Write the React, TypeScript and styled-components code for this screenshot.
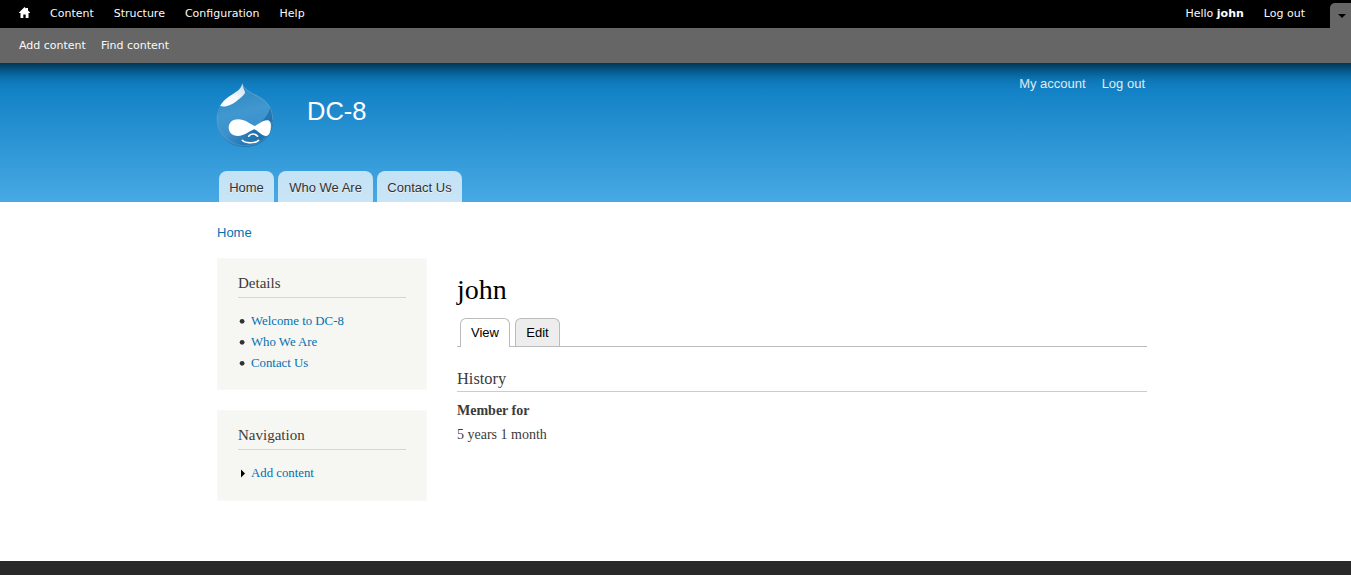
import React from 'react';
import styled, { createGlobalStyle } from 'styled-components';

const sans = '"Liberation Sans", Arial, sans-serif';
const serif = '"Liberation Serif", "Times New Roman", serif';

const GlobalStyle = createGlobalStyle`
  * { box-sizing: border-box; }
  body { margin: 0; background: #fff; color: #3b3b3b; font-family: ${serif}; overflow: hidden; }
  a { color: #0071b3; text-decoration: none; }
  h1, h2, h3, h4, p, ul { margin: 0; padding: 0; font-weight: normal; }
  ul { list-style: none; }
`;

const Page = styled.div`
  height: 575px;
  display: flex;
  flex-direction: column;
  overflow: hidden;
`;

const Toolbar = styled.div`
  position: relative;
  z-index: 2;
  flex: none;
  margin: 0 -30px;
  font: 11px/14px "DejaVu Sans", Verdana, sans-serif;
  box-shadow: 0 -3px 20px 6px rgba(0, 0, 0, 0.9);
  a { color: #fafafa; }
`;

const ToolbarMenu = styled.div`
  display: flex;
  height: 28px;
  background: #000;
  color: #fafafa;
  padding: 7px 30px 0 49px;
`;

const HomeIcon = styled.svg`
  display: block;
  width: 11px;
  height: 11px;
  margin: 0 20px 0 0;
`;

const MenuItems = styled.div`
  display: flex;
  gap: 20px;
`;

const UserMenu = styled(MenuItems)`
  margin-left: auto;
  b { color: #fff; }
`;

const ToggleTab = styled.div`
  width: 21px;
  height: 25px;
  margin: -4px 0 0 25px;
  padding: 11px 0 0 8px;
  border-top-left-radius: 5px;
  background: #666;
  svg { display: block; }
`;

const Shortcuts = styled.div`
  height: 35px;
  display: flex;
  gap: 15px;
  padding: 11px 49px 0;
  background: #666;
`;

const Header = styled.header`
  flex: none;
  height: 139px;
  background: linear-gradient(to bottom, #0779bf 0%, #48a9e4 100%);
`;

const Container = styled.div`
  width: 930px;
  margin-left: 217px;
`;

const HeaderInner = styled(Container)`
  height: 100%;
  display: grid;
  grid-template-columns: 90px 1fr auto;
  grid-template-rows: 108px 31px;
  font-family: ${sans};
`;

const Logo = styled.svg`
  display: block;
  width: 58px;
  height: 65px;
  margin: 20px 0 0 -1px;
`;

const SiteName = styled.div`
  padding-top: 32px;
  font-size: 25.5px;
  line-height: 32px;
  color: #fffeff;
`;

const AccountLinks = styled.nav`
  display: flex;
  gap: 16px;
  padding: 13px 2px 0 0;
  font-size: 13px;
  line-height: 16px;
  a { color: #e8f3fa; }
`;

const MainTabs = styled.nav`
  grid-column: 1 / -1;
  display: flex;
  gap: 4px;
  padding-left: 2px;
`;

const MainTab = styled.a<{ $width: number }>`
  width: ${p => p.$width}px;
  text-align: center;
  font-size: 13px;
  line-height: 33px;
  color: #333 !important;
  text-shadow: 0 1px #eee;
  background: rgba(255, 255, 255, 0.7);
  border-radius: 8px 8px 0 0;
`;

const Breadcrumb = styled(Container)`
  flex: none;
  height: 56px;
  padding-top: 23px;
  font: 13px/16px ${sans};
`;

const Main = styled(Container)`
  flex: 1;
  display: flex;
  gap: 30px;
`;

const Sidebar = styled.aside`
  width: 210px;
  display: flex;
  flex-direction: column;
  gap: 20px;
`;

const Block = styled.section<{ $height: number }>`
  height: ${p => p.$height}px;
  padding: 15px 20px;
  background: #f6f6f2;
  border: 1px solid #f9f9f9;
`;

const BlockTitle = styled.h2`
  height: 24px;
  margin-bottom: 12px;
  font-size: 15px;
  line-height: 19px;
  border-bottom: 1px solid #d6d6d6;
`;

const BlockItem = styled.li`
  display: flex;
  align-items: center;
  height: 21px;
  font-size: 12.8px;
  a { padding-top: 2px; }
`;

const Marker = styled.svg`
  width: 13px;
  height: 21px;
  flex: none;
`;

const Content = styled.main`
  width: 690px;
  padding-top: 14px;
`;

const PageTitle = styled.h1`
  color: #000;
  font-size: 28px;
  line-height: 36px;
`;

const ViewTabs = styled.div`
  display: flex;
  gap: 5px;
  height: 29px;
  margin-top: 10px;
  padding-left: 3px;
  border-bottom: 1px solid #bbb;
`;

const ViewTab = styled.a<{ $active?: boolean; $width: number }>`
  width: ${p => p.$width}px;
  height: ${p => (p.$active ? 29 : 28)}px;
  text-align: center;
  font: 13px/28px ${sans};
  color: #000 !important;
  background: ${p => (p.$active ? '#fff' : '#ededed')};
  border: 1px solid #bbb;
  border-bottom: 0;
  border-radius: 6px 6px 0 0;
`;

const SectionTitle = styled.h3`
  height: 23px;
  margin-top: 22px;
  font-size: 16.4px;
  line-height: 20px;
  border-bottom: 1px solid #ccc;
`;

const FieldLabel = styled.h4`
  margin-top: 8px;
  font-size: 14px;
  font-weight: bold;
  line-height: 21px;
`;

const FieldValue = styled.p`
  margin-top: 3px;
  font-size: 14px;
  line-height: 21px;
`;

const Footer = styled.footer`
  flex: none;
  height: 14px;
  background: #292929;
`;

function DropLogo() {
  return (
    <Logo viewBox="0 0 58 65">
      <defs>
        <linearGradient id="drop" x1="0.3" y1="0" x2="0.5" y2="1">
          <stop offset="0" stopColor="#2b86c0" />
          <stop offset="0.45" stopColor="#4197cf" />
          <stop offset="0.75" stopColor="#3a90ca" />
          <stop offset="1" stopColor="#2274b0" />
        </linearGradient>
        <linearGradient id="shade" x1="1" y1="0" x2="0.1" y2="0.6">
          <stop offset="0" stopColor="#2477b2" />
          <stop offset="0.6" stopColor="#2072ad" />
          <stop offset="1" stopColor="#2072ad" stopOpacity="0" />
        </linearGradient>
        <linearGradient id="shine" x1="1" y1="0" x2="0" y2="1">
          <stop offset="0" stopColor="#fff" stopOpacity="0.7" />
          <stop offset="0.5" stopColor="#fff" stopOpacity="0.95" />
          <stop offset="1" stopColor="#fff" />
        </linearGradient>
        <clipPath id="dropShape">
          <path d="M26.3 0 C28.5 6 34 9 41.5 12.5 C52 18 57.3 26 57.3 36.5 C57.3 53 44.5 64 29 64 C13 64 0.5 53 0.5 36.5 C0.5 27 5 19 13 13.5 C20 9 25 7 26.3 0Z" />
        </clipPath>
      </defs>
      <g clipPath="url(#dropShape)">
        <rect width="58" height="65" fill="url(#drop)" />
        <path d="M58 23 L54.5 22 C53.5 33 44 42 31 47 C20 51.5 11 53.5 3 51 L10 65 H58Z" fill="url(#shade)" />
        <path d="M1.5 31 C0 50 14 62.7 29 62.7 C44 62.7 56 52 56.3 38" fill="none" stroke="#62a8d5" strokeOpacity="0.4" strokeWidth="1.2" />
        <path d="M26.5 1 C28.5 6.5 34 9.5 41 13 C51.5 18 56.8 26 56.8 37" fill="none" stroke="#76b2d8" strokeOpacity="0.55" />
        <path d="M26.3 0 C21 7 8 10 3.8 22.8 C9 25 16 21.8 21 17.7 C25 14.5 30 10.8 29 8.8 C28 6.5 27 4.5 26.3 0Z" fill="url(#shine)" />
      </g>
      <path d="M22 36.3 C29 36.3 34 41 38.5 43 C42 41.5 46 37.5 51 37.2 C54.5 37 55.3 40.5 54.8 45 C54.4 50 52.5 53.3 49.5 53 C45.5 52.5 42 47.8 38.3 46.3 C33.5 48 28.5 52.9 22 52.9 C16 52.9 12.7 49 12.7 44.5 C12.7 39.8 16.5 36.3 22 36.3Z" fill="#fff" />
      <path d="M32.7 53.2 C34.5 50.3 39 50.2 41.6 53.2 M26.3 57.3 C29.5 60.8 39.5 60.4 42.5 57.3" fill="none" stroke="#fff" strokeWidth="1.7" strokeLinecap="round" />
    </Logo>
  );
}

const detailLinks = ['Welcome to DC-8', 'Who We Are', 'Contact Us'];

export default function App() {
  return (
    <Page>
      <GlobalStyle />
      <Toolbar>
        <ToolbarMenu>
          <a href="#">
            <HomeIcon viewBox="0 0 11 11">
              <path d="M5.5 0 L7 1.5 V1 H9 V3.4 L11 5.4 V6 H9.5 V11 H6.7 V7.5 H4.3 V11 H1.5 V6 H0 V5.4Z" fill="#fff" />
            </HomeIcon>
          </a>
          <MenuItems>
            <a href="#">Content</a>
            <a href="#">Structure</a>
            <a href="#">Configuration</a>
            <a href="#">Help</a>
          </MenuItems>
          <UserMenu>
            <a href="#">Hello <b>john</b></a>
            <a href="#">Log out</a>
          </UserMenu>
          <ToggleTab>
            <svg width="8" height="4" viewBox="0 0 8 4"><path d="M0 0 H8 L4 4Z" fill="#000" /></svg>
          </ToggleTab>
        </ToolbarMenu>
        <Shortcuts>
          <a href="#">Add content</a>
          <a href="#">Find content</a>
        </Shortcuts>
      </Toolbar>
      <Header>
        <HeaderInner>
          <DropLogo />
          <SiteName>DC-8</SiteName>
          <AccountLinks>
            <a href="#">My account</a>
            <a href="#">Log out</a>
          </AccountLinks>
          <MainTabs>
            <MainTab href="#" $width={55}>Home</MainTab>
            <MainTab href="#" $width={95}>Who We Are</MainTab>
            <MainTab href="#" $width={85}>Contact Us</MainTab>
          </MainTabs>
        </HeaderInner>
      </Header>
      <Breadcrumb><a href="#">Home</a></Breadcrumb>
      <Main>
        <Sidebar>
          <Block $height={132}>
            <BlockTitle>Details</BlockTitle>
            <ul>
              {detailLinks.map(label => (
                <BlockItem key={label}>
                  <Marker viewBox="0 0 13 21"><circle cx="4.1" cy="11.3" r="2.4" fill="#333" /></Marker>
                  <a href="#">{label}</a>
                </BlockItem>
              ))}
            </ul>
          </Block>
          <Block $height={91}>
            <BlockTitle>Navigation</BlockTitle>
            <ul>
              <BlockItem>
                <Marker viewBox="0 0 13 21"><path d="M3 7.5 L7 11.5 L3 15.5Z" fill="#000" /></Marker>
                <a href="#">Add content</a>
              </BlockItem>
            </ul>
          </Block>
        </Sidebar>
        <Content>
          <PageTitle>john</PageTitle>
          <ViewTabs>
            <ViewTab href="#" $active $width={50}>View</ViewTab>
            <ViewTab href="#" $width={45}>Edit</ViewTab>
          </ViewTabs>
          <SectionTitle>History</SectionTitle>
          <FieldLabel>Member for</FieldLabel>
          <FieldValue>5 years 1 month</FieldValue>
        </Content>
      </Main>
      <Footer />
    </Page>
  );
}
